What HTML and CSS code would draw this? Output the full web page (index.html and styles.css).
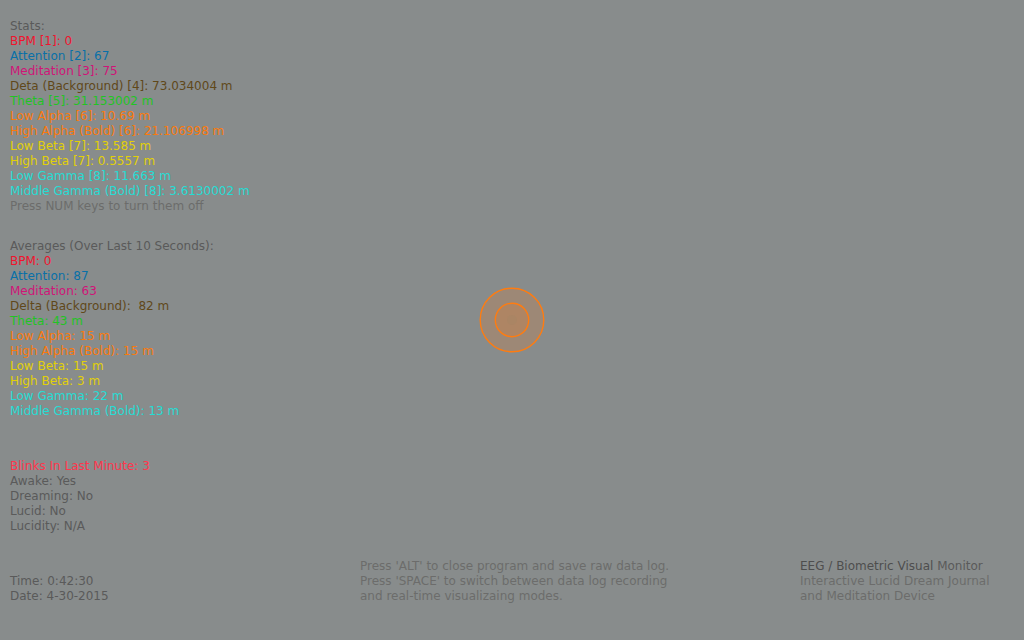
FILE: index.html
```html
<!DOCTYPE html>
<html lang="en">
<head>
<meta charset="utf-8">
<meta name="viewport" content="width=device-width, initial-scale=1">
<title>EEG / Biometric Visual Monitor</title>
<link rel="stylesheet" href="styles.css">
</head>
<body>
<main class="monitor">
  <section class="panel">
    <p class="label">Stats:</p>
    <p class="bpm">BPM [1]: 0</p>
    <p class="attention">Attention [2]: 67</p>
    <p class="meditation">Meditation [3]: 75</p>
    <p class="delta">Deta (Background) [4]: 73.034004 m</p>
    <p class="theta">Theta [5]: 31.153002 m</p>
    <p class="alpha">Low Alpha [6]: 10.69 m</p>
    <p class="alpha">High Alpha (Bold) [6]: 21.106998 m</p>
    <p class="beta">Low Beta [7]: 13.585 m</p>
    <p class="beta">High Beta [7]: 0.5557 m</p>
    <p class="gamma">Low Gamma [8]: 11.663 m</p>
    <p class="gamma">Middle Gamma (Bold) [8]: 3.6130002 m</p>
    <p class="hint">Press NUM keys to turn them off</p>
  </section>

  <section class="panel averages">
    <p class="label">Averages (Over Last 10 Seconds):</p>
    <p class="bpm">BPM: 0</p>
    <p class="attention">Attention: 87</p>
    <p class="meditation">Meditation: 63</p>
    <p class="delta">Delta (Background):&nbsp; 82 m</p>
    <p class="theta">Theta: 43 m</p>
    <p class="alpha">Low Alpha: 15 m</p>
    <p class="alpha">High Alpha (Bold): 15 m</p>
    <p class="beta">Low Beta: 15 m</p>
    <p class="beta">High Beta: 3 m</p>
    <p class="gamma">Low Gamma: 22 m</p>
    <p class="gamma">Middle Gamma (Bold): 13 m</p>
  </section>

  <section class="panel sleep">
    <p class="blinks">Blinks In Last Minute: 3</p>
    <p class="label">Awake: Yes</p>
    <p class="label">Dreaming: No</p>
    <p class="label">Lucid: No</p>
    <p class="label">Lucidity: N/A</p>
  </section>

  <footer class="footer">
    <div class="label">
      <p>Time: 0:42:30</p>
      <p>Date: 4-30-2015</p>
    </div>
    <div class="hint">
      <p>Press 'ALT' to close program and save raw data log.</p>
      <p>Press 'SPACE' to switch between data log recording</p>
      <p>and real-time visualizaing modes.</p>
    </div>
    <div class="hint">
      <h1 class="title">EEG / Biometric Visual <span class="label">Monitor</span></h1>
      <p>Interactive Lucid Dream Journal</p>
      <p>and Meditation Device</p>
    </div>
  </footer>

  <svg class="rings" viewBox="0 0 66 66" aria-hidden="true">
    <circle class="ring" cx="33" cy="33" r="31.8"/>
    <circle class="ring" cx="33" cy="33" r="16.7"/>
    <circle class="core" cx="33" cy="33" r="5"/>
  </svg>
</main>
</body>
</html>
```

FILE: styles.css
```css
* {
  box-sizing: border-box;
}

body {
  margin: 0;
  background: #888c8c;
  font: 12px/15px "DejaVu Sans", Verdana, sans-serif;
}

p,
.title {
  margin: 0;
  font: inherit;
}

.monitor {
  position: relative;
  display: flex;
  flex-direction: column;
  min-height: 100vh;
  padding: 19px 10px 36px;
}

.averages {
  margin-top: 25px;
}

.sleep {
  margin-top: 40px;
}

.footer {
  display: grid;
  grid-template-columns: 350fr 440fr 214fr;
  align-items: end;
  margin-top: auto;
  padding-top: 25px;
}

.label { color: #5a5a5a; }
.hint { color: #6c6c6b; }
.title { color: #4e4e4e; }
.bpm { color: #f0142e; }
.attention { color: #0870a8; }
.meditation { color: #d01478; }
.delta { color: #60481a; }
.theta { color: #22c424; }
.alpha { color: #fa7a0c; }
.beta { color: #e2d008; }
.gamma { color: #26dcd4; }
.blinks { color: #ff364c; }

.rings {
  position: absolute;
  top: 50%;
  left: 50%;
  width: 66px;
  height: 66px;
  transform: translate(-50%, -50%);
}

.ring {
  fill: rgba(255, 124, 20, 0.18);
  stroke: #ff7c10;
  stroke-width: 1.4;
}

.core {
  fill: rgba(160, 136, 100, 0.25);
}
```
